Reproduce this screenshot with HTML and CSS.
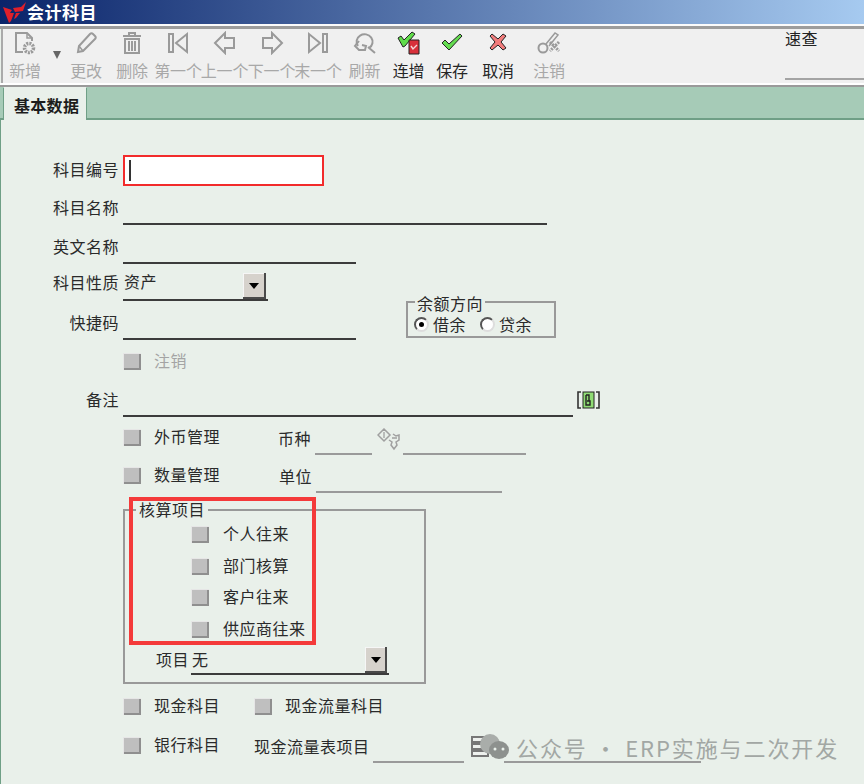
FILE: index.html
```html
<!DOCTYPE html>
<html lang="zh-CN">
<head>
<meta charset="utf-8">
<title>会计科目</title>
<link rel="stylesheet" href="styles.css">
</head>
<body>
<div class="window">
  <header class="titlebar">
    <svg class="logo" width="23" height="21" viewBox="0 0 23 21"><path d="M0 5l9 3-2 3h4l-3 8-2 2z" fill="#e0202a"/><path d="M10 6l8-1 5-5-3 9-8 1z" fill="#e0202a"/><path d="M13 11h4l-4 5-2 1z" fill="#e0202a"/></svg>
    <span class="title">会计科目</span>
  </header>
  <div class="titlegap"></div>
  <nav class="toolbar">
    <div class="tool w44 off">
      <svg width="24" height="24" viewBox="0 0 24 24"><path d="M10 21H3V2h11l5 5v3" class="ic"/><path d="M14 2v5h5" class="ic thin"/><circle cx="16" cy="17" r="4.5" fill="none" stroke="#9a9a9a" stroke-width="3.5" stroke-dasharray="2 1"/></svg>
      <span>新增</span>
    </div>
    <div class="caretcol"><svg width="10" height="8" viewBox="0 0 10 8"><path d="M1 0h8L5 8z" fill="#666"/></svg></div>
    <div class="tool w46 off">
      <svg width="24" height="24" viewBox="0 0 24 24"><path d="M4 21l1-6L16 3c1-1 2-1 3 0l2 2c1 1 1 2 0 3L9 20z" class="ic"/><path d="M5 15l4 5" class="ic thin"/></svg>
      <span>更改</span>
    </div>
    <div class="tool w46 off">
      <svg width="24" height="24" viewBox="0 0 24 24"><path d="M3 5h18M9 5V2h6v3M5 8h14v14H5zM9 10v10M12 10v10M15 10v10" class="ic"/></svg>
      <span>删除</span>
    </div>
    <div class="tool w46 off">
      <svg width="24" height="24" viewBox="0 0 24 24"><path d="M3 3h4v18H3zM21 3v18L10 12z" class="ic"/></svg>
      <span>第一个</span>
    </div>
    <div class="tool w47 off">
      <svg width="24" height="24" viewBox="0 0 24 24"><path d="M2 12L12 2v5h9v10h-9v5z" class="ic"/></svg>
      <span>上一个</span>
    </div>
    <div class="tool w47 off">
      <svg width="24" height="24" viewBox="0 0 24 24"><path d="M22 12L12 2v5H3v10h9v5z" class="ic"/></svg>
      <span>下一个</span>
    </div>
    <div class="tool w46 off">
      <svg width="24" height="24" viewBox="0 0 24 24"><path d="M21 3h-4v18h4zM3 3v18l11-9z" class="ic"/></svg>
      <span>末一个</span>
    </div>
    <div class="tool w47 off">
      <svg width="24" height="24" viewBox="0 0 24 24"><path d="M5 15a8 7.500 0 1 1 11 2" class="ic"/><path d="M6 10l-4 5 4 4 6 0 1-4-4-1M15 16l7 6" class="ic"/></svg>
      <span>刷新</span>
    </div>
    <div class="tool w41">
      <svg width="24" height="24" viewBox="0 0 24 24"><path d="M1 7l3-2 3 4 8-8 3 2L8 15l-2 1z" fill="#5fdc4a" stroke="#222" stroke-width="1"/><path d="M12 9h10v14H12z" fill="#d8303a" stroke="#222" stroke-width="1"/><path d="M14 15l2 3 4-4" fill="none" stroke="#f4d6d6" stroke-width="1.4"/></svg>
      <span>连增</span>
    </div>
    <div class="tool w46">
      <svg width="24" height="24" viewBox="0 0 24 24"><path d="M2 12l3-3 4 4L20 3l2 2L9 19z" fill="#64dc50" stroke="#222" stroke-width="1"/></svg>
      <span>保存</span>
    </div>
    <div class="tool w46">
      <svg width="24" height="24" viewBox="0 0 24 24"><path d="M6 3l6 5 5-5 3 2-5 6 5 6-3 2-5-5-6 5-2-2 5-6-5-6z" fill="#f27c7c" stroke="#222" stroke-width="1"/></svg>
      <span>取消</span>
    </div>
    <div class="tool w56 off">
      <svg width="24" height="24" viewBox="0 0 24 24"><circle cx="6" cy="17" r="4.500" class="ic"/><path d="M9 13L18 2l3 2-9 11" class="ic thin"/><path d="M13 11l9 9M22 11l-9 9" stroke="#9a9a9a" stroke-width="3" stroke-dasharray="2 1"/></svg>
      <span>注销</span>
    </div>
    <div class="quick"><span>速查</span></div>
  </nav>
  <div class="toolgap"></div>
  <div class="tabbar"><div class="tab">基本数据</div></div>

  <main class="form">
    <div class="row r-code">
      <label class="lab">科目编号</label>
      <div class="codebox"><i class="caret"></i></div>
    </div>
    <div class="row r-name">
      <label class="lab">科目名称</label>
      <div class="field f424"></div>
    </div>
    <div class="row r-en">
      <label class="lab">英文名称</label>
      <div class="field f233"></div>
    </div>
    <div class="row r-nature">
      <label class="lab">科目性质</label>
      <div class="field f145 combo"><span>资产</span><button class="drop d23"><i></i></button></div>
    </div>
    <div class="row r-short">
      <label class="lab lab-short">快捷码</label>
      <div class="field f233"></div>
      <div class="groupbox balance">
        <span class="legend">余额方向</span>
        <div class="radios">
          <span class="radio on"></span><span class="rlabel">借余</span>
          <span class="radio next"></span><span class="rlabel">贷余</span>
        </div>
      </div>
    </div>
    <div class="row r-void">
      <span class="check"></span><span class="clabel muted">注销</span>
    </div>
    <div class="row r-note">
      <label class="lab">备注</label>
      <div class="field f450"></div>
      <svg class="memo" width="23" height="20" viewBox="0 0 23 20"><path d="M4 2H1v16h3M19 2h3v16h-3" fill="none" stroke="#333" stroke-width="1.6"/><rect x="6" y="2" width="11" height="16" fill="#8fdc74" stroke="#222"/><path d="M9 5v10h4v-4h-3M9 5h3v6" fill="none" stroke="#222" stroke-width="1.400"/></svg>
    </div>
    <div class="row r-fx">
      <span class="check"></span><span class="clabel c124">外币管理</span>
      <span class="sublab">币种</span>
      <div class="field thin f57"></div>
      <svg class="lookup" width="24" height="23" viewBox="0 0 24 23"><path d="M7 1l6 6-6 6-6-6zM16 6l3 2 3-1v5l-3 2 1 3-3 4-3-4 1-3-3-2" fill="none" stroke="#a0a0a0" stroke-width="1.5"/><path d="M7 4v6M15 10h5" stroke="#a0a0a0" stroke-width="1.3"/></svg>
      <div class="field thin f123"></div>
    </div>
    <div class="row r-qty">
      <span class="check"></span><span class="clabel c124">数量管理</span>
      <span class="sublab s-unit">单位</span>
      <div class="field thin f186"></div>
    </div>

    <section class="groupbox acct">
      <span class="legend">核算项目</span>
      <div class="acct-row"><span class="check"></span><span class="clabel">个人往来</span></div>
      <div class="acct-row"><span class="check"></span><span class="clabel">部门核算</span></div>
      <div class="acct-row"><span class="check"></span><span class="clabel">客户往来</span></div>
      <div class="acct-row"><span class="check"></span><span class="clabel">供应商往来</span></div>
      <div class="acct-item">
        <span class="itemlab">项目</span>
        <div class="field f198 combo"><span>无</span><button class="drop d22"><i></i></button></div>
      </div>
      <div class="redmark"></div>
    </section>

    <div class="row r-cash">
      <span class="check"></span><span class="clabel c100">现金科目</span>
      <span class="check"></span><span class="clabel">现金流量科目</span>
    </div>
    <div class="row r-bank">
      <span class="check"></span><span class="clabel c100">银行科目</span>
      <span class="sublab s-flow">现金流量表项目</span>
      <div class="field thin f91"></div>
      <svg class="stack" width="21" height="22" viewBox="0 0 21 22"><path d="M2 1h16v5H2zM2 8h16v5H2zM2 15h16v5H2z" fill="#eef1ee" stroke="#777" stroke-width="2"/></svg>
      <div class="field thin f197"></div>
    </div>

    <div class="watermark">
      <svg width="32" height="26" viewBox="0 0 32 26"><circle cx="11" cy="10" r="10" fill="#a9adaa"/><ellipse cx="20" cy="16" rx="10" ry="9" fill="#8d918e"/><circle cx="16" cy="15" r="1.5" fill="#e9f0ea"/><circle cx="24" cy="15" r="1.5" fill="#e9f0ea"/></svg>
      <span>公众号 · ERP实施与二次开发</span>
    </div>
  </main>
</div>
</body>
</html>
```
FILE: styles.css
```css
* { box-sizing: border-box; }
html, body { margin: 0; padding: 0; }
body { width: 864px; height: 784px; overflow: hidden; background: #e9f0ea; font-family: "Noto Sans CJK SC", "Noto Sans", sans-serif; font-size: 16px; color: #2a2a2a; }
.window { width: 864px; height: 784px; display: flex; flex-direction: column; position: relative; overflow: hidden; }

.titlebar { height: 24px; flex: none; display: flex; align-items: center; padding-left: 3px; background: linear-gradient(90deg, #0a246a 0%, #a6caf0 100%); }
.logo { flex: none; }
.title { margin-left: 1px; color: #fff; font-weight: 700; font-size: 17px; letter-spacing: .5px; line-height: 24px; }
.titlegap { height: 5px; flex: none; background: #fbfbfb; border-bottom: 3px solid #9c9c9c; }

.toolbar { height: 54px; flex: none; display: flex; background: #f0f0f0; border-left: 2px solid #aaa; margin-left: 1px; }
.tool { flex: none; display: flex; flex-direction: column; align-items: center; padding-top: 2px; color: #262626; white-space: nowrap; font-size: 16px; line-height: 20px; }
.tool svg { height: 24px; flex: none; }
.tool span { margin-top: 5px; letter-spacing: -.2px; }
.off { color: #a8a8a8; }
.w41 { width: 41px; }
.w44 { width: 44px; }
.w46 { width: 46px; }
.w47 { width: 47px; }
.w56 { width: 56px; }
.caretcol { width: 16px; flex: none; padding: 22px 0 0 5px; line-height: 0; }
.ic { fill: none; stroke: #9a9a9a; stroke-width: 2; }
.ic.thin { stroke-width: 1.5; }
.quick { margin-left: auto; width: 79px; height: 51px; border-bottom: 2px solid #a4a4a4; color: #222; line-height: 20px; }
.quick span { display: block; margin-top: -1px; letter-spacing: .5px; }

.toolgap { height: 4px; flex: none; background: #fff; border-bottom: 2px solid #9a9a9a; }
.tabbar { height: 33px; flex: none; padding-left: 3px; background: #a6cbb7; border-bottom: 2px solid #6f9f86; }
.tab { width: 84px; height: 33px; padding-left: 10px; background: #e9f0ea; border: 1px solid #6f9f86; border-bottom: 0; border-top-color: #e9f0ea; font-weight: 700; font-size: 16px; line-height: 34px; letter-spacing: .3px; color: #1c1c1c; }

.form { flex: 1; min-height: 0; position: relative; padding-top: 35px; background: #e9f0ea; border-left: 1px solid #6f9f86; }
.row { display: flex; align-items: center; }
.lab { width: 118px; flex: none; text-align: right; letter-spacing: .5px; line-height: 20px; margin-bottom: 2px; }
.r-code .lab { margin-bottom: 4px; }
.lab-short { align-self: flex-start; margin-top: 11px; margin-bottom: 0; }
.field { flex: none; align-self: stretch; margin-left: 4px; border-bottom: 2px solid #3c3c3c; }
.field.thin { border-bottom-color: #9a9a9a; }
.f57 { width: 57px; }
.f91 { width: 91px; }
.f123 { width: 123px; }
.f145 { width: 145px; }
.f186 { width: 186px; }
.f197 { width: 197px; }
.f198 { width: 198px; margin-left: 2px; }
.f233 { width: 233px; }
.f424 { width: 424px; }
.f450 { width: 450px; }
.combo { display: flex; justify-content: space-between; align-items: flex-end; padding-left: 1px; letter-spacing: .5px; }
.combo span { align-self: center; line-height: 20px; margin-bottom: 2px; }
.drop { display: block; padding: 0; height: 26px; background: #d6d2cc; border: 0; box-shadow: inset -2px -2px 0 #4a4a4a, inset 1px 1px 0 #f6f6f6; position: relative; margin-right: 2px; }
.d22 { width: 22px; }
.d23 { width: 23px; }
.drop i { position: absolute; left: 6px; top: 10px; border: 5px solid transparent; border-top: 6px solid #000; border-bottom: 0; }

.codebox { width: 201px; height: 31px; margin-left: 4px; background: #fff; border: 2px solid #f22b2b; padding: 3px 0 0 4px; }
.caret { display: block; width: 2px; height: 21px; background: #333; }
.r-code { height: 31px; }
.r-name { height: 35px; margin-top: 4px; }
.r-en { height: 34px; margin-top: 5px; }
.r-nature { height: 36px; margin-top: 1px; }
.r-short { height: 39px; align-items: flex-start; }
.r-void { height: 18px; margin-top: 12px; padding-left: 122px; }
.r-note { height: 34px; margin-top: 13px; }
.r-fx { height: 30px; margin-top: 8px; padding-left: 122px; align-items: flex-start; }
.r-qty { height: 30px; margin-top: 8px; padding-left: 122px; align-items: flex-start; }
.r-cash { height: 23px; margin-top: 11px; padding-left: 122px; }
.r-bank { height: 30px; margin-top: 15px; padding-left: 122px; align-items: flex-start; }

.check { width: 18px; height: 17px; flex: none; background: #bfbfbf; box-shadow: inset 1px 1px 0 #e6e6e6, inset -2px -2px 0 #8f8f8f; }
.clabel { margin-left: 13px; line-height: 20px; letter-spacing: .5px; white-space: nowrap; margin-bottom: 3px; }
.acct-row .clabel { margin-left: 14px; }
.c124 { width: 124px; }
.c100 { width: 100px; }
.muted { color: #a4a4a4; }
.r-fx .check, .r-qty .check, .r-bank .check { margin-top: 4px; }
.r-fx .clabel, .r-qty .clabel { margin-top: 1px; margin-bottom: 0; }
.r-bank .clabel { margin-top: 1px; margin-bottom: 0; }
.sublab { width: 37px; flex: none; margin-top: 3px; letter-spacing: .5px; line-height: 20px; white-space: nowrap; }
.s-unit { margin-left: 1px; }
.s-flow { width: 115px; }
.r-fx .field, .r-qty .field, .r-bank .field { margin-left: 0; }
.r-fx .f123 { margin-left: 2px; }
.r-bank .f91 { margin-left: 4px; }
.r-bank .f197 { margin-left: 13px; }
.lookup { flex: none; margin: 3px 0 0 5px; }
.memo { margin-left: 4px; flex: none; margin-top: 0; }
.stack { flex: none; margin: 3px 0 0 6px; }

.groupbox { position: relative; border: 2px solid #999; }
.legend { position: absolute; left: 7px; top: -10px; padding: 0 2px; background: #e9f0ea; line-height: 20px; letter-spacing: .5px; white-space: nowrap; color: #2a2a2a; }
.balance { width: 150px; height: 37px; flex: none; margin-left: 50px; }
.radios { display: flex; align-items: center; padding: 9px 0 0 6px; height: 100%; }
.radio { width: 15px; height: 15px; flex: none; border-radius: 50%; background: #fff; border: 2px solid; border-color: #555 #ddd #ddd #555; position: relative; }
.radio.on::after { content: ""; position: absolute; left: 3px; top: 3px; width: 5px; height: 5px; border-radius: 50%; background: #000; }
.radio.next { margin-left: 14px; }
.rlabel { margin-left: 4px; letter-spacing: .5px; line-height: 20px; }

.acct { width: 303px; height: 175px; margin: 16px 0 0 122px; padding-top: 15px; }
.acct .legend { left: 11px; padding: 0 3px; top: -12px; }
.acct-row { height: 17px; margin: 0 0 14.5px 66px; display: flex; align-items: center; }
.acct-item { display: flex; align-items: center; height: 28px; margin: -5px 0 0 31px; }
.itemlab { width: 33px; flex: none; letter-spacing: .5px; line-height: 20px; margin-bottom: 4px; }
.redmark { position: absolute; left: 4px; top: -14px; width: 187px; height: 148px; border: 4px solid #f43a3a; }

.watermark { position: absolute; left: 478px; top: 612px; display: flex; align-items: center; gap: 5px; color: #a2a7a4; font-size: 22px; line-height: 30px; letter-spacing: 1.9px; white-space: nowrap; }
```
